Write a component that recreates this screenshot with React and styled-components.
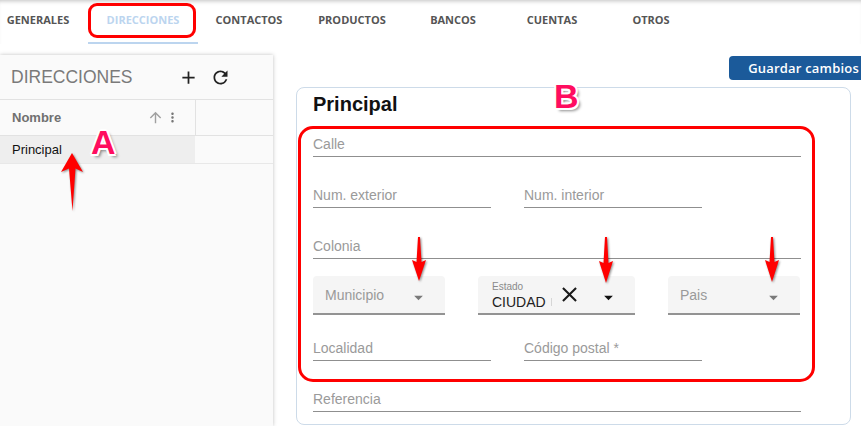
import React from "react";
import styled, { createGlobalStyle } from "styled-components";
import {
  MdAdd,
  MdRefresh,
  MdArrowUpward,
  MdMoreVert,
  MdArrowDropDown,
  MdClose,
} from "react-icons/md";

const GlobalStyle = createGlobalStyle`
  * { box-sizing: border-box; }
  body {
    margin: 0;
    background: #fff;
    font-family: "Liberation Sans", Arial, sans-serif;
  }
`;

const tabs = [
  { label: "GENERALES", w: 100 },
  { label: "DIRECCIONES", w: 110, active: true },
  { label: "CONTACTOS", w: 102 },
  { label: "PRODUCTOS", w: 104 },
  { label: "BANCOS", w: 98 },
  { label: "CUENTAS", w: 100 },
  { label: "OTROS", w: 98 },
];

const App = () => {
  return (
    <>
      <GlobalStyle />
      <Page>
        <TabBar>
          {tabs.map((t) => (
            <Tab key={t.label} $w={t.w} $active={t.active}>
              {t.label}
            </Tab>
          ))}
        </TabBar>

        <Body>
          <Sidebar>
            <SidebarHeader>
              <SidebarTitle>DIRECCIONES</SidebarTitle>
              <HeaderIcons>
                <IconButton>
                  <MdAdd size={21} />
                </IconButton>
                <IconButton>
                  <MdRefresh size={21} />
                </IconButton>
              </HeaderIcons>
            </SidebarHeader>
            <GridHeader>
              <NameCell>
                <span>Nombre</span>
                <SortIcons>
                  <MdArrowUpward size={17} color="#a0a0a0" />
                  <MdMoreVert size={15} color="#777" />
                </SortIcons>
              </NameCell>
            </GridHeader>
            <GridRow>
              <RowCell>Principal</RowCell>
            </GridRow>
          </Sidebar>

          <Main>
            <Toolbar>
              <SaveButton>Guardar cambios</SaveButton>
            </Toolbar>
            <Card>
              <CardTitle>Principal</CardTitle>

              <FieldRow $mt={11}>
                <TextField $w={488}>Calle</TextField>
              </FieldRow>
              <FieldRow $mt={21}>
                <TextField $w={178}>Num. exterior</TextField>
                <TextField $w={178}>Num. interior</TextField>
              </FieldRow>
              <FieldRow $mt={21}>
                <TextField $w={488}>Colonia</TextField>
              </FieldRow>

              <FieldRow $mt={17}>
                <SelectBox $w={132}>
                  <SelectText>Municipio</SelectText>
                  <Caret>
                    <MdArrowDropDown size={21} color="#7a7a7a" />
                  </Caret>
                </SelectBox>
                <SelectBox $w={157}>
                  <ValueWrap>
                    <SmallLabel>Estado</SmallLabel>
                    <Value>CIUDAD</Value>
                  </ValueWrap>
                  <Divider />
                  <ClearIcon>
                    <MdClose size={25} color="#1a1a1a" />
                  </ClearIcon>
                  <Caret>
                    <MdArrowDropDown size={21} color="#111" />
                  </Caret>
                </SelectBox>
                <SelectBox $w={132}>
                  <SelectText>Pais</SelectText>
                  <Caret>
                    <MdArrowDropDown size={21} color="#7a7a7a" />
                  </Caret>
                </SelectBox>
              </FieldRow>

              <FieldRow $mt={16}>
                <TextField $w={178}>Localidad</TextField>
                <TextField $w={178}>Código postal *</TextField>
              </FieldRow>
              <FieldRow $mt={21}>
                <TextField $w={488}>Referencia</TextField>
              </FieldRow>
            </Card>
          </Main>
        </Body>

        {/* annotations */}
        <Highlight $x={88} $y={3} $w={108} $h={35} $r={9} />
        <Highlight $x={298} $y={126} $w={517} $h={256} $r={15} />
        <Letter $x={91} $y={125}>A</Letter>
        <Letter $x={554} $y={79}>B</Letter>

        <ArrowSvg $x={60} $y={151} width="24" height="62" viewBox="0 0 24 62">
          <path d="M12 2 L23 21 L15.5 17.5 L12.5 60 L9 17.5 L1 21 Z" />
        </ArrowSvg>
        <ArrowSvg $x={411} $y={237} width="16" height="48" viewBox="0 0 16 48">
          <path d="M7 0 L9 0 L10.5 25 L15 23 L8 44 L1 23 L5.5 25 Z" />
        </ArrowSvg>
        <ArrowSvg $x={598} $y={237} width="16" height="50" viewBox="0 0 16 50">
          <path d="M7 0 L9 0 L10.5 26 L15 24 L8 46 L1 24 L5.5 26 Z" />
        </ArrowSvg>
        <ArrowSvg $x={764} $y={237} width="16" height="48" viewBox="0 0 16 48">
          <path d="M7 0 L9 0 L10.5 25 L15 23 L8 45 L1 23 L5.5 25 Z" />
        </ArrowSvg>
      </Page>
    </>
  );
};

const Page = styled.div`
  position: relative;
  width: 861px;
  height: 426px;
  overflow: hidden;
  display: flex;
  flex-direction: column;
  background: #fff;
`;

const TabBar = styled.div`
  height: 44px;
  display: flex;
  flex-shrink: 0;
  box-shadow: inset 0 4px 4px -3px rgba(0, 0, 0, 0.25);

  & > :first-child {
    margin-left: -12px;
  }
`;

const Tab = styled.div`
  width: ${({ $w }) => $w}px;
  height: 44px;
  padding-top: 12px;
  text-align: center;
  font-family: "Open Sans", sans-serif;
  font-weight: 700;
  font-size: 11px;
  line-height: 16px;
  color: ${({ $active }) => ($active ? "#bcd5ef" : "#555555")};
  border-bottom: 2px solid
    ${({ $active }) => ($active ? "#bcd5ef" : "transparent")};
`;

const Body = styled.div`
  flex: 1;
  display: flex;
  padding-top: 11px;
  min-height: 0;
`;

const Sidebar = styled.aside`
  width: 273px;
  flex-shrink: 0;
  background: #fafafa;
  box-shadow: 0 0 4px rgba(0, 0, 0, 0.25);
  position: relative;
  z-index: 1;
`;

const SidebarHeader = styled.div`
  height: 45px;
  display: flex;
  align-items: center;
  padding-left: 11px;
  border-bottom: 1px solid #e2e2e2;
`;

const SidebarTitle = styled.h2`
  margin: 0;
  font-weight: 400;
  font-size: 17.5px;
  color: #7a7a7a;
`;

const HeaderIcons = styled.div`
  margin-left: auto;
  margin-right: 37px;
  display: flex;
`;

const IconButton = styled.div`
  width: 32px;
  height: 32px;
  display: flex;
  align-items: center;
  justify-content: center;
  color: #222;
`;

const GridHeader = styled.div`
  height: 36px;
  display: flex;
  border-bottom: 1px solid #e2e2e2;
`;

const NameCell = styled.div`
  width: 196px;
  display: flex;
  align-items: center;
  padding-left: 12px;
  border-right: 1px solid #e2e2e2;
  font-weight: 700;
  font-size: 13px;
  color: #707070;
`;

const SortIcons = styled.div`
  margin-left: auto;
  margin-right: 15px;
  display: flex;
  align-items: center;
  gap: 1px;
`;

const GridRow = styled.div`
  height: 28px;
  display: flex;
  border-bottom: 1px solid #e8e8e8;
`;

const RowCell = styled.div`
  width: 195px;
  background: #eeeeee;
  display: flex;
  align-items: center;
  padding-left: 12px;
  font-size: 13px;
  color: #111;
`;

const Main = styled.main`
  flex: 1;
  display: flex;
  flex-direction: column;
  padding: 1px 0 0 23px;
`;

const Toolbar = styled.div`
  display: flex;
  justify-content: flex-end;
`;

const SaveButton = styled.button`
  height: 24px;
  margin-right: -17px;
  padding: 0 19px;
  border: none;
  border-radius: 4px;
  background: #1b5a9a;
  color: #fff;
  font-family: "Open Sans", sans-serif;
  font-weight: 600;
  font-size: 13px;
  letter-spacing: 0.2px;
  white-space: nowrap;
`;

const Card = styled.section`
  width: 555px;
  flex: 1;
  margin: 7px 0 1px;
  padding: 0 16px;
  border: 1px solid #cddbe9;
  border-radius: 8px;
`;

const CardTitle = styled.h3`
  margin: 4px 0 0;
  font-size: 20px;
  line-height: 24px;
  font-weight: 700;
  color: #111;
`;

const FieldRow = styled.div`
  display: flex;
  gap: 33px;
  margin-top: ${({ $mt }) => $mt}px;
`;

const TextField = styled.div`
  width: ${({ $w }) => $w}px;
  height: 30px;
  display: flex;
  align-items: flex-end;
  padding-bottom: 4px;
  border-bottom: 1px solid #8f8f8f;
  font-size: 14px;
  line-height: 16px;
  color: #9a9a9a;
`;

const SelectBox = styled.div`
  width: ${({ $w }) => $w}px;
  height: 39px;
  display: flex;
  align-items: center;
  padding-left: 12px;
  background: #f5f5f5;
  border-radius: 4px 4px 0 0;
  border-bottom: 2px solid #939393;
`;

const SelectText = styled.span`
  font-size: 14px;
  color: #9a9a9a;
`;

const Caret = styled.span`
  margin-left: auto;
  margin-right: 16px;
  margin-top: 6px;
  display: flex;
`;

const ValueWrap = styled.div`
  display: flex;
  flex-direction: column;
  padding-left: 2px;
  margin-top: 2px;
`;

const SmallLabel = styled.span`
  font-size: 10px;
  line-height: 12px;
  color: #8a8a8a;
`;

const Value = styled.span`
  font-size: 14px;
  line-height: 18px;
  color: #222;
`;

const Divider = styled.span`
  width: 1px;
  height: 8px;
  margin: 14px 0 0 5px;
  background: #d6d6d6;
`;

const ClearIcon = styled.span`
  display: flex;
  margin-left: 5px;
`;

const Highlight = styled.div`
  position: absolute;
  z-index: 5;
  left: ${({ $x }) => $x}px;
  top: ${({ $y }) => $y}px;
  width: ${({ $w }) => $w}px;
  height: ${({ $h }) => $h}px;
  border: 3px solid #ff0000;
  border-radius: ${({ $r }) => $r}px;
  pointer-events: none;
`;

const Letter = styled.span`
  position: absolute;
  z-index: 5;
  left: ${({ $x }) => $x}px;
  top: ${({ $y }) => $y}px;
  font-family: "Liberation Sans", Arial, sans-serif;
  font-weight: 700;
  font-size: 34px;
  line-height: 34px;
  color: #ff0d5f;
  text-shadow: 2px 0 #fff, -2px 0 #fff, 0 2px #fff, 0 -2px #fff,
    1.5px 1.5px #fff, -1.5px -1.5px #fff, 1.5px -1.5px #fff,
    -1.5px 1.5px #fff, 3px 3px 3px rgba(0, 0, 0, 0.45);
`;

const ArrowSvg = styled.svg`
  position: absolute;
  z-index: 5;
  left: ${({ $x }) => $x}px;
  top: ${({ $y }) => $y}px;
  fill: #ff0000;
  overflow: visible;
  filter: drop-shadow(1px 1px 1px rgba(0, 0, 0, 0.45));
`;

export default App;
